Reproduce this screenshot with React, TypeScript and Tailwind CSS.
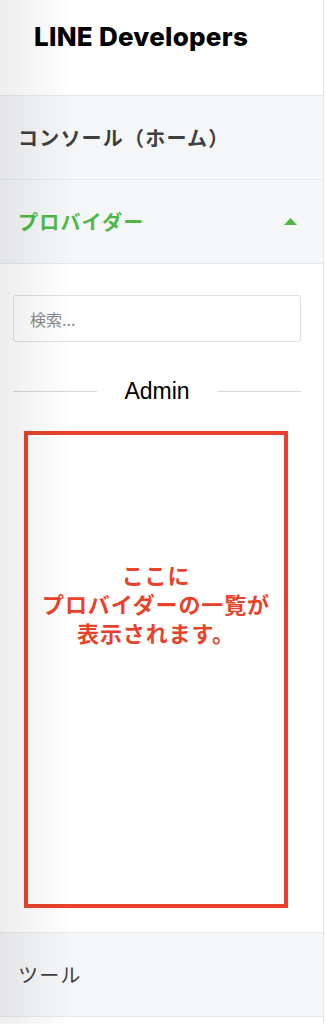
const jp = { fontFamily: '"Noto Sans CJK JP", "Noto Sans", sans-serif' };

function NavRow({ label, active, bold }: { label: string; active?: boolean; bold?: boolean }) {
  return (
    <div className="flex items-center justify-between h-[84px] pl-[18px] pr-[26px] bg-[#f5f6f8] border-b border-[#e6e8eb]">
      <span
        className={`text-[20px] tracking-[0.06em] ${bold ? "font-bold" : "font-normal"} ${
          active ? "text-[#4cb944]" : "text-[#3f3f3f]"
        }`}
      >
        {label}
      </span>
      {active && (
        <svg width="13" height="7" viewBox="0 0 13 7">
          <path d="M6.5 0 L13 7 L0 7 Z" fill="#4cb944" />
        </svg>
      )}
    </div>
  );
}

export default function App() {
  return (
    <div className="relative w-[326px] h-[1024px] overflow-hidden bg-white" style={jp}>
      <div className="w-[324px] h-full border-r border-[#e4e7ec] flex flex-col">
        <div className="h-[96px] border-b border-[#e6e8eb] flex items-start pt-[17px] pl-[34px]">
          <span
            className="text-[26px] font-extrabold text-black tracking-[0.01em]"
            style={{ fontFamily: 'Inter, "Liberation Sans", sans-serif' }}
          >
            LINE Developers
          </span>
        </div>
        <NavRow label="コンソール（ホーム）" bold />
        <NavRow label="プロバイダー" bold active />

        <div className="flex flex-col pl-[13px] pt-[31px] pb-[24px] border-b border-[#e6e8eb]">
          <input
            placeholder="検索..."
            className="h-[47px] w-[288px] rounded-[3px] border border-[#dcdfe3] px-[16px] text-[16px] placeholder:text-[#8a8a8a] outline-none"
            style={jp}
          />
          <div className="flex items-center w-[288px] mt-[35px] h-[28px]">
            <div className="flex-1 h-px bg-[#d5d8dc]" />
            <span
              className="px-[27px] text-[23px] text-black"
              style={{ fontFamily: '"Liberation Sans", Arial, sans-serif' }}
            >
              Admin
            </span>
            <div className="flex-1 h-px bg-[#d5d8dc]" />
          </div>
          <div className="mt-[26px] ml-[11px] w-[264px] h-[477px] border-[4px] border-[#e8432a] flex flex-col items-center pt-[125px]">
            <p className="text-[22px] leading-[29px] font-bold text-[#e8432a] text-center tracking-[0.04em]">
              ここに
              <br />
              プロバイダーの一覧が
              <br />
              表示されます。
            </p>
          </div>
        </div>

        <NavRow label="ツール" />
      </div>
      <div className="pointer-events-none absolute inset-y-0 left-0 w-[72px] bg-gradient-to-r from-black/[0.07] to-transparent" />
    </div>
  );
}
